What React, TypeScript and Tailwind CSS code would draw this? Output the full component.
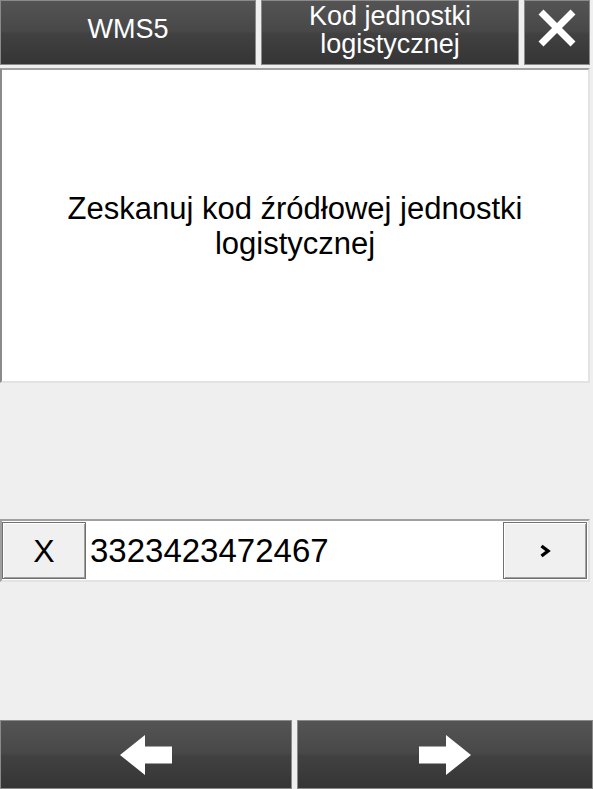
const font = { fontFamily: '"Liberation Sans", Arial, sans-serif' }

const darkBtn =
  'flex items-center justify-center border border-[#8a8a8a] bg-[linear-gradient(to_bottom,#545454_0%,#484848_48%,#414141_52%,#353535_100%)] text-white'

function ArrowLeft() {
  return (
    <svg width="52" height="40" viewBox="0 0 52 40" aria-hidden="true">
      <polygon points="0,20 25,0 25,11.5 52,11.5 52,28.5 25,28.5 25,40" fill="#fff" />
    </svg>
  )
}

function ArrowRight() {
  return (
    <svg width="52" height="40" viewBox="0 0 52 40" aria-hidden="true">
      <polygon points="52,20 27,0 27,11.5 0,11.5 0,28.5 27,28.5 27,40" fill="#fff" />
    </svg>
  )
}

export default function App() {
  return (
    <div
      className="flex h-[789px] w-[593px] flex-col overflow-hidden bg-[#efefef]"
      style={font}
    >
      {/* top bar */}
      <div className="flex h-[65px] gap-[5px] pr-[3px]">
        <div className={`${darkBtn} w-[256px] pb-[6px] text-[27px]`}>WMS5</div>
        <div className={`${darkBtn} w-[258px] flex-col pb-[6px] text-center text-[27px] leading-[28px]`}>
          <span>Kod jednostki</span>
          <span>logistycznej</span>
        </div>
        <div className={`${darkBtn} w-[66px] pb-[10px]`}>
          <svg width="40" height="40" viewBox="0 0 40 40" aria-hidden="true">
            <path d="M4 4 L36 36 M36 4 L4 36" stroke="#fff" strokeWidth="7" />
          </svg>
        </div>
      </div>

      {/* message panel */}
      <div className="mt-[3px] flex h-[315px] w-[590px] items-center justify-center border-2 border-t-[#a0a0a0] border-l-[#8a8a8a] border-r-[#e3e3e3] border-b-[#e3e3e3] bg-white">
        <p className="px-2 text-center text-[31px] leading-[35px] text-black">
          Zeskanuj kod źródłowej jednostki
          <br />
          logistycznej
        </p>
      </div>

      {/* scan input */}
      <div className="mt-[136px] flex h-[63px] w-[590px] border-2 border-t-[#a0a0a0] border-l-[#a0a0a0] border-r-[#e3e3e3] border-b-[#e3e3e3] bg-white py-[1px] pr-[1px]">
        <button className="flex w-[84px] items-center justify-center border border-[#707070] bg-[#f0f0f0] text-[32px] text-black shadow-[inset_1px_1px_0_#fff,inset_-1px_-1px_0_#a0a0a0]">
          X
        </button>
        <div className="flex flex-1 items-center pl-[4px] text-[33px] text-black">3323423472467</div>
        <button className="flex w-[84px] items-center justify-center border border-[#707070] bg-[#f0f0f0] shadow-[inset_1px_1px_0_#fff,inset_-1px_-1px_0_#a0a0a0]">
          <svg width="12" height="14" viewBox="0 0 12 14" aria-hidden="true">
            <polyline points="2.5,2 9,7 2.5,12" fill="none" stroke="#000" strokeWidth="3.4" />
          </svg>
        </button>
      </div>

      {/* navigation */}
      <div className="mt-auto flex h-[69px] gap-[5px]">
        <div className={`${darkBtn} w-[292px]`}>
          <ArrowLeft />
        </div>
        <div className={`${darkBtn} flex-1`}>
          <ArrowRight />
        </div>
      </div>
    </div>
  )
}
